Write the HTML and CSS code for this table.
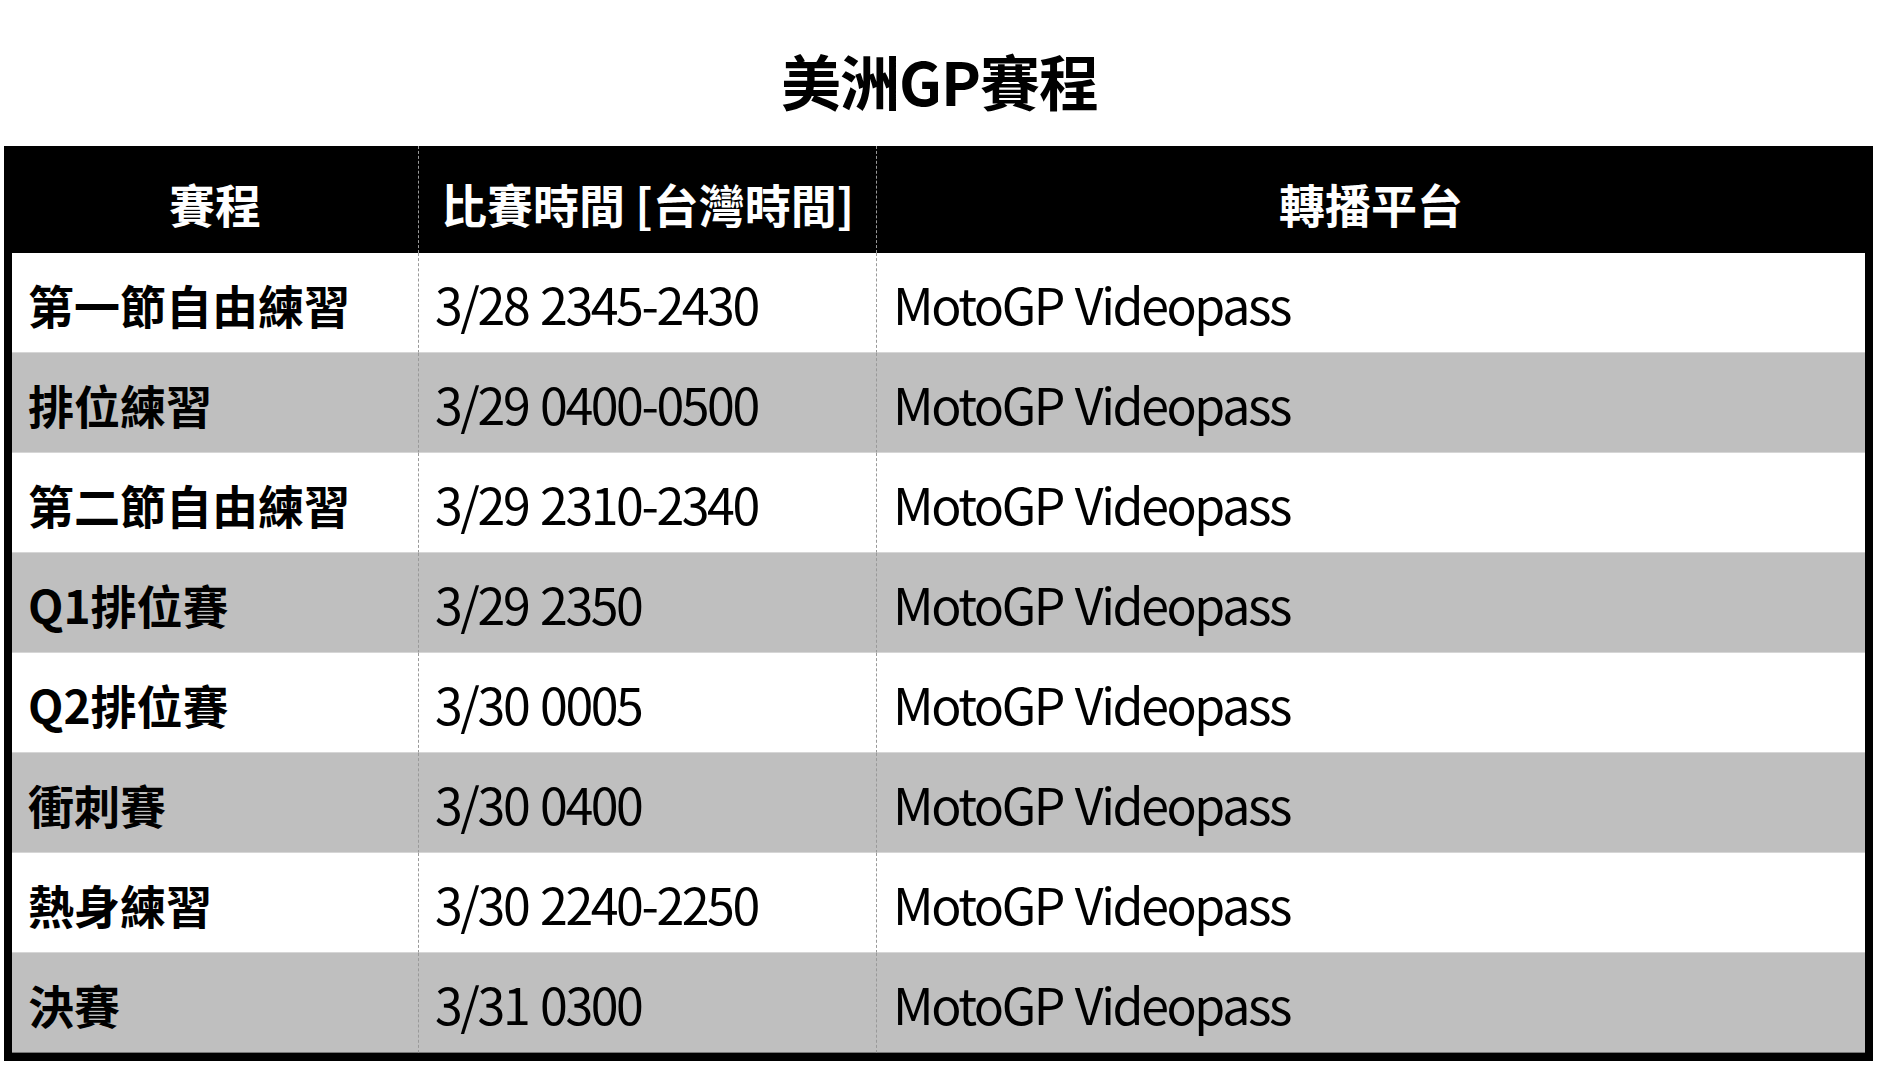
FILE: index.html
```html
<!DOCTYPE html>
<html lang="zh-Hant">
<head>
<meta charset="utf-8">
<title>美洲GP賽程</title>
<link rel="stylesheet" href="styles.css">
</head>
<body>
<h1 class="title">美洲GP賽程</h1>
<div class="frame">
  <table class="schedule">
    <colgroup>
      <col class="c1">
      <col class="c2">
      <col class="c3">
    </colgroup>
    <thead>
      <tr><th>賽程</th><th>比賽時間 [台灣時間]</th><th>轉播平台</th></tr>
    </thead>
    <tbody>
      <tr><td class="name">第一節自由練習</td><td>3/28 2345-2430</td><td>MotoGP Videopass</td></tr>
      <tr><td class="name">排位練習</td><td>3/29 0400-0500</td><td>MotoGP Videopass</td></tr>
      <tr><td class="name">第二節自由練習</td><td>3/29 2310-2340</td><td>MotoGP Videopass</td></tr>
      <tr><td class="name">Q1排位賽</td><td>3/29 2350</td><td>MotoGP Videopass</td></tr>
      <tr><td class="name">Q2排位賽</td><td>3/30 0005</td><td>MotoGP Videopass</td></tr>
      <tr><td class="name">衝刺賽</td><td>3/30 0400</td><td>MotoGP Videopass</td></tr>
      <tr><td class="name">熱身練習</td><td>3/30 2240-2250</td><td>MotoGP Videopass</td></tr>
      <tr><td class="name">決賽</td><td>3/31 0300</td><td>MotoGP Videopass</td></tr>
    </tbody>
  </table>
</div>
</body>
</html>
```
FILE: styles.css
```css
html, body {
  margin: 0;
  padding: 0;
  background: #ffffff;
}
body {
  font-family: "Noto Sans CJK TC", "Noto Sans CJK SC", sans-serif;
  color: #000;
}
.title {
  margin: 0;
  padding-top: 37px;
  height: 109px;
  line-height: 86px;
  text-align: center;
  font-size: 60px;
  font-weight: 700;
  letter-spacing: -1px;
}
.frame {
  margin: 0 6px 0 4px;
  border-style: solid;
  border-color: #000;
  border-width: 0 8px 8px 8px;
  background: #000;
}
.schedule {
  width: 100%;
  border-collapse: separate;
  border-spacing: 0;
  table-layout: fixed;
}
.c1 { width: 406px; }
.c2 { width: 458px; }
.schedule th {
  background: #000;
  color: #fff;
  height: 107px;
  box-sizing: border-box;
  padding: 7px 0 0 0;
  font-size: 46px;
  font-weight: 700;
  text-align: center;
  vertical-align: middle;
}
.schedule td {
  height: 100px;
  box-sizing: border-box;
  padding: 0 16px 0 16px;
  font-size: 50px;
  font-weight: 400;
  letter-spacing: -2.4px;
  word-spacing: 3px;
  background: #ffffff;
  border-bottom: 1px solid #d6d6d6;
  vertical-align: middle;
  white-space: nowrap;
}
.schedule tbody tr:nth-child(even) td {
  background: #bfbfbf;
}
.schedule tbody tr:last-child td {
  border-bottom-color: #777;
}
.schedule th + th,
.schedule td + td {
  border-left: 1px dashed #999;
}
.schedule td.name {
  font-weight: 700;
  font-size: 46px;
  letter-spacing: 0;
  word-spacing: 0;
  padding-top: 2px;
}
```
